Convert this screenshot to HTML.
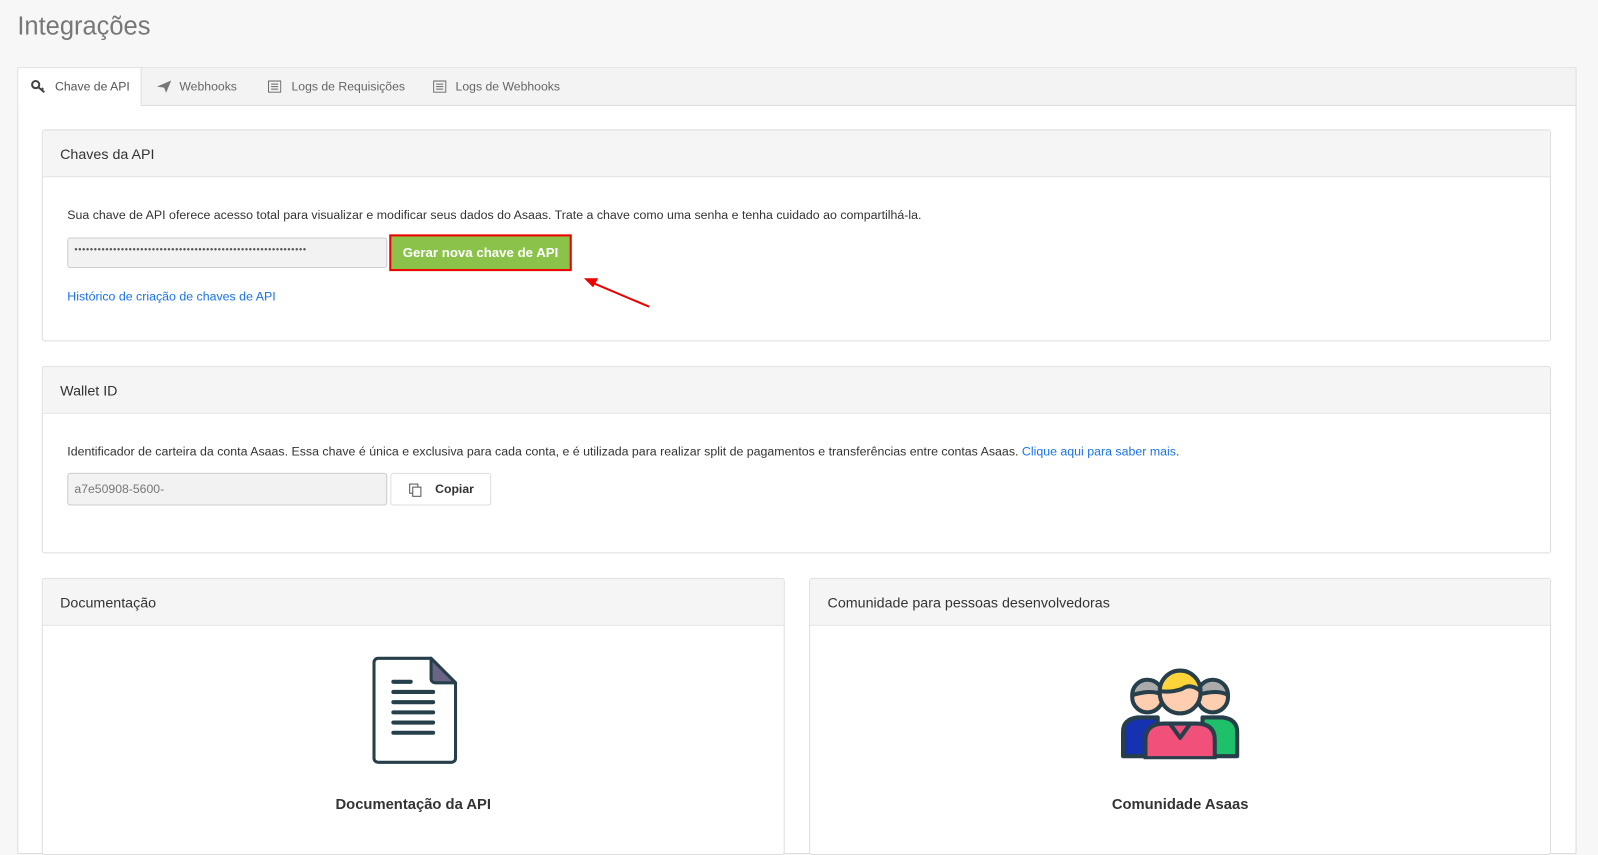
<!DOCTYPE html><html><head><meta charset="utf-8"><style>
body{margin:0;background:#f7f7f8;font-family:"Liberation Sans",sans-serif;width:1598px;height:823px;overflow:hidden;position:relative;color:#333}
#w{position:absolute;left:0;top:0;width:1568px;height:808px;transform:scale(1.0191);transform-origin:0 0}
.a{position:absolute}
h1{position:absolute;left:17px;top:12px;margin:0;font-weight:normal;font-size:25px;color:#777}
.outer{left:17px;top:66px;width:1528px;height:770px;border:1px solid #ddd;background:#fff}
.tabs{left:0;top:0;width:1528px;height:36px;background:#f3f3f3;border-bottom:1px solid #ddd}
.tab{position:absolute;top:11px;font-size:12.5px;color:#666}
.panel{border:1px solid #ddd;border-radius:3px;background:#fff}
.ph{position:absolute;left:0;top:0;right:0;height:45px;background:#f5f5f5;border-bottom:1px solid #ddd;border-radius:3px 3px 0 0}
.ph span{position:absolute;left:17px;top:15px;font-size:14px;color:#333}
.t{font-size:12.15px;color:#333}
.inp{background:#f2f2f2;border:1px solid #ccc;border-radius:3px;height:28px}
</style></head><body><div id="w">
<h1>Integrações</h1>
<div class="a outer">
 <div class="a tabs"></div>
 <div class="a" style="left:0;top:0;width:120px;height:37px;background:#fff;border-right:1px solid #ddd"></div>
 <svg class="a" style="left:12px;top:11px" width="16" height="14" viewBox="0 0 16 14"><circle cx="5" cy="5" r="3.5" fill="none" stroke="#444" stroke-width="2"/><path d="M7.5 7.5l6 5M10.5 10l2-1.5" stroke="#444" stroke-width="2"/></svg>
 <div class="tab" style="left:36px;color:#555;font-size:12px">Chave de API</div>
 <svg class="a" style="left:135px;top:11px" width="16" height="14" viewBox="0 0 16 14"><path d="M1 7L15 1 10 13 8 8z" fill="#777"/></svg>
 <div class="tab" style="left:158px;font-size:12px">Webhooks</div>
 <svg class="a" style="left:245px;top:12px" width="13" height="12"><rect x="0.5" y="0.5" width="12" height="11" fill="none" stroke="#666"/><path d="M3 3.5h7M3 6h7M3 8.5h7" stroke="#666"/></svg>
 <div class="tab" style="left:268px;font-size:12px">Logs de Requisições</div>
 <svg class="a" style="left:407px;top:12px" width="13" height="12"><rect x="0.5" y="0.5" width="12" height="11" fill="none" stroke="#666"/><path d="M3 3.5h7M3 6h7M3 8.5h7" stroke="#666"/></svg>
 <div class="tab" style="left:429px;font-size:12px">Logs de Webhooks</div>
</div>

<div class="a panel" style="left:41px;top:127px;width:1479px;height:206px">
 <div class="ph"><span>Chaves da API</span></div>
 <div class="a t" style="left:24px;top:76px">Sua chave de API oferece acesso total para visualizar e modificar seus dados do Asaas. Trate a chave como uma senha e tenha cuidado ao compartilhá-la.</div>
 <div class="a inp" style="left:24px;top:105px;width:312px"><span style="position:absolute;left:6px;top:6px;font-size:9px;color:#555;letter-spacing:0.65px">••••••••••••••••••••••••••••••••••••••••••••••••••••••••••••</span></div>
 <div class="a" style="left:340px;top:102px;width:175px;height:32px;background:#8bc34a;border:2px solid #e00;color:#fff;font-weight:bold;font-size:13px;text-align:center;line-height:32px">Gerar nova chave de API</div>
 <div class="a t" style="left:24px;top:156px;color:#1a73e8">Histórico de criação de chaves de API</div>
</div>
<svg class="a" style="left:570px;top:268px" width="70" height="36"><path d="M67 33L8 8" stroke="#e00" stroke-width="2"/><path d="M3 5l14 0-5 9z" fill="#e00"/></svg>

<div class="a panel" style="left:41px;top:359px;width:1479px;height:182px">
 <div class="ph"><span>Wallet ID</span></div>
 <div class="a t" style="left:24px;top:76px">Identificador de carteira da conta Asaas. Essa chave é única e exclusiva para cada conta, e é utilizada para realizar split de pagamentos e transferências entre contas Asaas. <span style="color:#1a73e8">Clique aqui para saber mais</span>.</div>
 <div class="a inp" style="left:24px;top:104px;width:312px;height:30px"><span style="position:absolute;left:6px;top:8px;font-size:12px;color:#777">a7e50908-5600-</span></div>
 <div class="a" style="left:341px;top:104px;width:97px;height:30px;border:1px solid #ddd;border-radius:3px;background:#fff"><svg class="a" style="left:17px;top:9px" width="14" height="14"><rect x="1" y="1" width="8" height="9" fill="none" stroke="#555"/><rect x="4" y="4" width="8" height="9" fill="#fff" stroke="#555"/></svg><span style="position:absolute;left:43px;top:8px;font-size:12px;font-weight:bold">Copiar</span></div>
</div>

<div class="a panel" style="left:41px;top:567px;width:727px;height:270px">
 <div class="ph"><span>Documentação</span></div>
 <div class="a" style="left:0;right:0;top:214px;text-align:center;font-size:14.5px;font-weight:bold">Documentação da API</div>
</div>
<svg class="a" style="left:364px;top:644px" width="86" height="106" viewBox="0 0 86 106"><path d="M7 2h52l24 24v74a4 4 0 0 1-4 4H7a4 4 0 0 1-4-4V6a4 4 0 0 1 4-4z" fill="#fff" stroke="#263f4a" stroke-width="3"/><path d="M59 2v20a4 4 0 0 0 4 4h20z" fill="#6a6587" stroke="#263f4a" stroke-width="3" stroke-linejoin="round"/><g stroke="#263f4a" stroke-width="4" stroke-linecap="round"><path d="M22 25h17M22 35h39M22 45h39M22 55h39M22 65h39M22 75h39"/></g></svg>

<div class="a panel" style="left:794px;top:567px;width:726px;height:270px">
 <div class="ph"><span>Comunidade para pessoas desenvolvedoras</span></div>
 <div class="a" style="left:0;right:0;top:214px;text-align:center;font-size:14.5px;font-weight:bold">Comunidade Asaas</div>
</div>
<svg class="a" style="left:1098px;top:650px" width="120" height="95" viewBox="0 0 120 95"><g stroke="#263f4a" stroke-width="4" stroke-linejoin="round"><path d="M4 92V68q0-12 14-14h20v38z" fill="#1632b0"/><path d="M116 92V68q0-12-14-14H82v38z" fill="#1fc06a"/><circle cx="28" cy="34" r="15" fill="#ffcdb0"/><path d="M13 32a15 15 0 0 1 30 0q-10-6-30 0z" fill="#aaa"/><circle cx="92" cy="34" r="15" fill="#ffcdb0"/><path d="M77 32a15 15 0 0 1 30 0q-10-6-30 0z" fill="#aaa"/><path d="M26 94V76q0-16 18-16h32q18 0 18 16v18z" fill="#f0507a"/><circle cx="60" cy="30" r="20" fill="#ffcdb0"/><path d="M40 28a20 20 0 0 1 40 0q-10-8-18-2-12 4-22 2z" fill="#ffd43a"/><path d="M50 60l10 14 10-14" fill="none"/></g></svg>
</div></body></html>
